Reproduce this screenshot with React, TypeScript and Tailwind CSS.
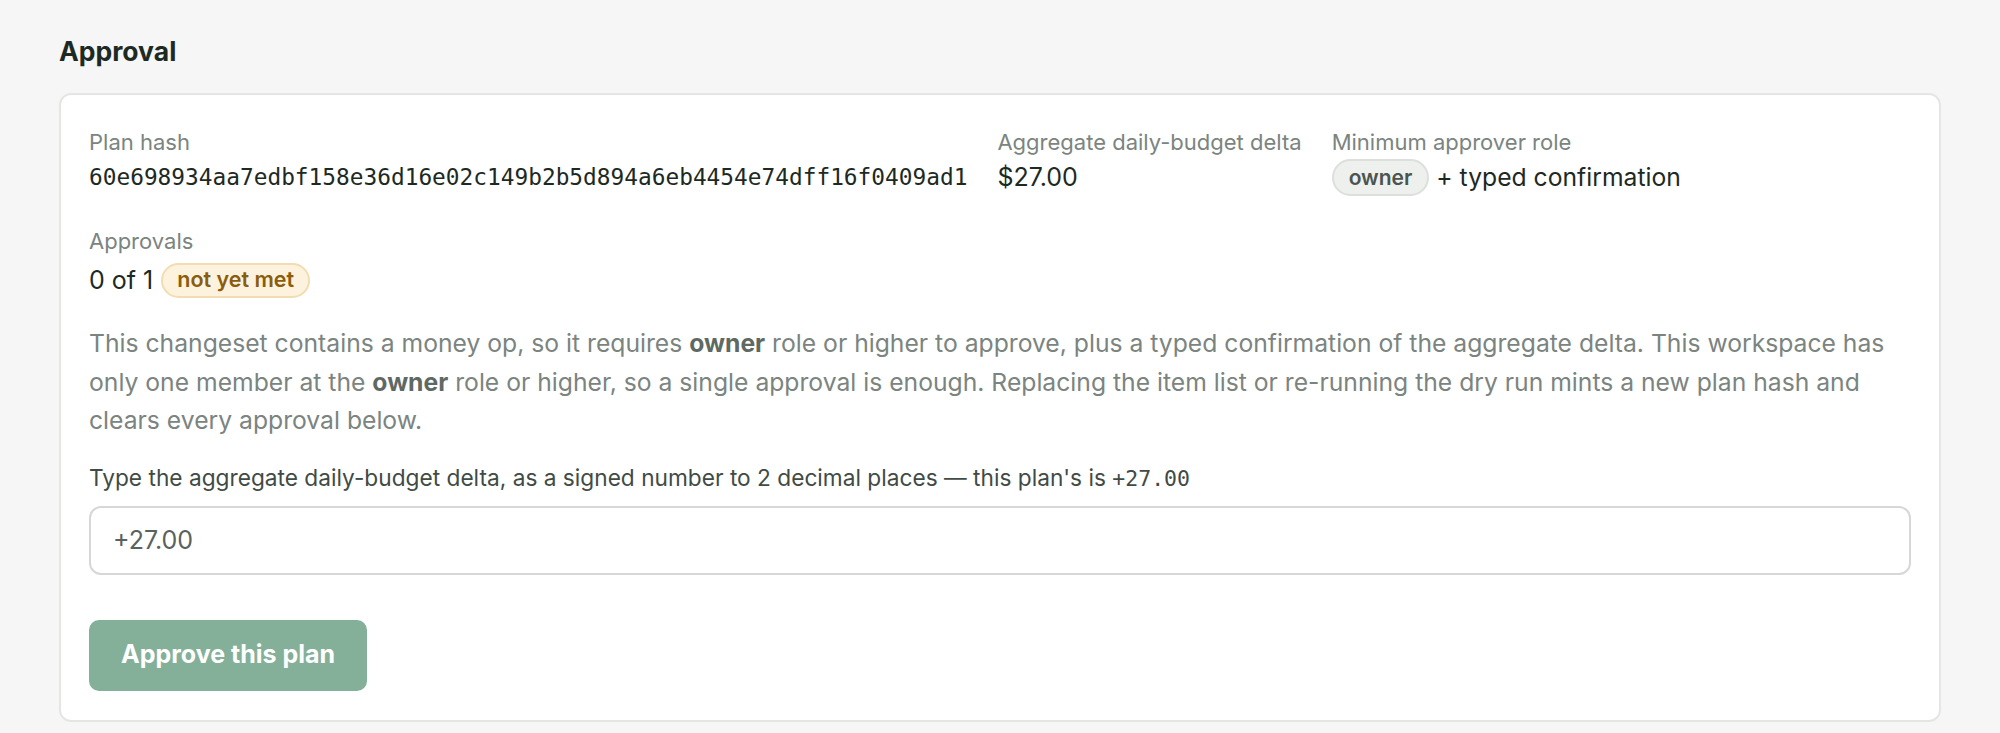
import React from 'react'

const sans = "font-['Inter','Noto_Sans',sans-serif]"
const mono = "font-['DejaVu_Sans_Mono','Liberation_Mono',monospace]"

function Field({ label, gap, children }: { label: string; gap: string; children: React.ReactNode }) {
  return (
    <div className="flex flex-col">
      <span className="text-[22px] leading-[28px] text-[#7b847f] whitespace-nowrap">{label}</span>
      <div className={`flex items-center h-[38px] whitespace-nowrap ${gap}`}>{children}</div>
    </div>
  )
}

export default function App() {
  const planHash = '60e698934aa7edbf158e36d16e02c149b2b5d894a6eb4454e74dff16f0409ad1'

  return (
    <div className={`min-h-screen bg-[#f6f6f6] px-[59px] pt-[36px] ${sans}`}>
      <h2 className="text-[26.5px] leading-[30px] font-bold text-[#1d2a23]">Approval</h2>

      <div className="mt-[27px] bg-white border-2 border-[#e4e6e4] rounded-[12px] px-[28px] pt-[33px] pb-[29px]">
        {/* summary row */}
        <div className="flex gap-[30px]">
          <Field label="Plan hash" gap="mt-[2px]">
            <span className={`${mono} text-[22.8px] leading-[30px] text-[#1d2a23]`}>{planHash}</span>
          </Field>
          <Field label="Aggregate daily-budget delta" gap="mt-[2px]">
            <span className="text-[25px] leading-[30px] text-[#1d2a23]">$27.00</span>
          </Field>
          <Field label="Minimum approver role" gap="mt-[2px]">
            <span className="inline-flex items-center h-[37px] px-[15px] rounded-full bg-[#eef0ee] border-2 border-[#dcdfdc] text-[21px] leading-none font-semibold text-[#4b544e]">
              owner
            </span>
            <span className="ml-[7px] text-[24.7px] leading-[30px] text-[#1d2a23]">+ typed confirmation</span>
          </Field>
        </div>

        <div className="mt-[31px]">
          <Field label="Approvals" gap="mt-[6px]">
            <span className="text-[25px] leading-[30px] text-[#1d2a23]">0 of 1</span>
            <span className="ml-[8px] inline-flex items-center h-[35px] px-[14px] rounded-full bg-[#fdf2dd] border-2 border-[#f2ddb2] text-[21.5px] leading-none font-semibold text-[#8a5d0c]">
              not yet met
            </span>
          </Field>
        </div>

        <p className="mt-[25px] text-[24.7px] leading-[38.5px] text-[#7b847f]">
          This changeset contains a money op, so it requires <strong className="font-bold text-[#5f6963]">owner</strong> role or
          higher to approve, plus a typed confirmation of the aggregate delta. This workspace has only one member at
          the <strong className="font-bold text-[#5f6963]">owner</strong> role or higher, so a single approval is enough.
          Replacing the item list or re-running the dry run mints a new plan hash and clears every approval below.
        </p>

        <label className="block mt-[23px] text-[22.7px] leading-[30px] text-[#414b45]">
          Type the aggregate daily-budget delta, as a signed number to 2 decimal places — this plan's is{' '}
          <span className={`${mono} text-[21.5px] text-[#414b45]`}>+27.00</span>
        </label>

        <input
          readOnly
          value="+27.00"
          className="mt-[12px] block w-full h-[69px] px-[22px] rounded-[12px] border-2 border-[#d5d8d6] bg-white text-[25px] text-[#5a625d] outline-none"
        />

        <button className="mt-[45px] h-[71px] px-[32px] rounded-[10px] bg-[#84b09a] text-white text-[25px] font-bold">
          Approve this plan
        </button>
      </div>
    </div>
  )
}
